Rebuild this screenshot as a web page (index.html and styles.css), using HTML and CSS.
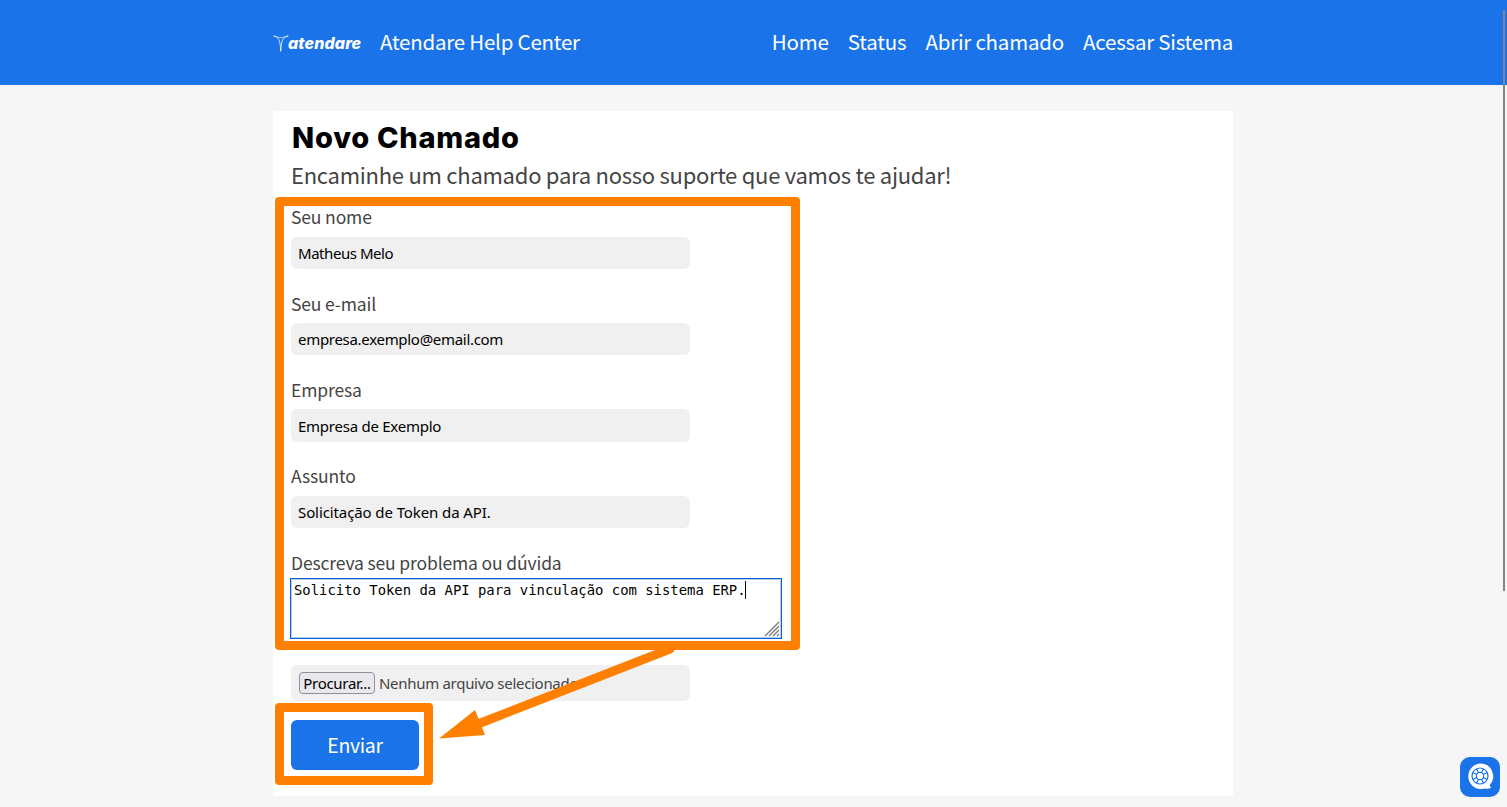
FILE: index.html
```
<!DOCTYPE html>
<html lang="pt-BR">
<head>
<meta charset="utf-8">
<title>Atendare Help Center</title>
<link rel="stylesheet" href="styles.css">
</head>
<body>
<header class="topbar">
  <div class="topbar-inner">
    <div class="logo">
      <svg class="logo-mark" width="16" height="17" viewBox="0 0 16 17" fill="none" stroke="#fff"><path d="M.3 1C5 1 7.600 5 7.600 16.500M15.500 1C10.500 1 7.900 5 7.900 16" stroke-width=".8"/><path d="M1 1C5 3 11 3 15 1" stroke-width=".6"/></svg>
      <span class="logo-name">atendare</span>
    </div>
    <a class="brand">Atendare Help Center</a>
    <nav class="nav"><a>Home</a><a>Status</a><a>Abrir chamado</a><a>Acessar Sistema</a></nav>
  </div>
</header>
<main class="card">
  <h1 class="title">Novo Chamado</h1>
  <p class="subtitle">Encaminhe um chamado para nosso suporte que vamos te ajudar!</p>
  <form class="form">
    <div class="field"><label class="label">Seu nome</label><div class="input input-name">Matheus Melo</div></div>
    <div class="field"><label class="label label-low">Seu e-mail</label><div class="input">empresa.exemplo@email.com</div></div>
    <div class="field"><label class="label label-low">Empresa</label><div class="input input-company">Empresa de Exemplo</div></div>
    <div class="field"><label class="label">Assunto</label><div class="input input-subject">Solicitação de Token da API.</div></div>
    <div class="message"><label class="label label-low">Descreva seu problema ou dúvida</label>
      <div class="textarea"><span>Solicito Token da API para vinculação com sistema ERP.</span><i class="caret"></i>
        <svg class="grip" width="16" height="16" viewBox="0 0 16 16" stroke="#777" stroke-width="1.300"><path d="M1 15L15 1M5 15L15 5M9 15L15 9M13 15L15 13"/></svg>
      </div>
    </div>
    <div class="file"><span class="browse">Procurar...</span><span>Nenhum arquivo selecionado</span></div>
    <div class="submit">Enviar</div>
  </form>
</main>
<div class="frame frame-form"></div>
<div class="frame frame-submit"></div>
<svg class="arrow" width="250" height="100" viewBox="430 645 250 100"><path d="M670 649L478 724" stroke="#ff8000" stroke-width="9" stroke-linecap="round"/><path d="M439 738.500L475 710L485 735Z" fill="#ff8000"/></svg>
<div class="scroll"></div>
<div class="chat">
  <svg width="40" height="40" viewBox="0 0 40 40" fill="none"><path d="M20 6.500A12.500 12.800 0 1 0 24.500 31.500C26.500 32 29 32 31.500 30.800C30.500 30.300 30 29.500 29.800 27.800A12.700 12.700 0 0 0 20 6.500Z" fill="#fff"/><g stroke="#1a73e8" stroke-width="1.200"><circle cx="20" cy="19" r="8"/><circle cx="20" cy="19" r="3.700"/><path d="M16.500 11.800L18.200 15.500M23.500 11.800L21.800 15.500M16.500 26.200L18.200 22.500M23.500 26.200L21.800 22.500M12.800 15.500L16.500 17.200M12.800 22.500L16.500 20.800M27.200 15.500L23.500 17.200M27.200 22.500L23.500 20.800"/></g></svg>
</div>
</body>
</html>
```
FILE: styles.css
```
* { box-sizing: border-box; }
html, body { height: 100%; overflow: hidden; }
body { margin: 0; background: #f6f6f6; font-family: "Noto Sans CJK JP", "Noto Sans", sans-serif; color: #444; white-space: nowrap; }
.topbar { height: 85px; background: #1a73e8; color: #fff; }
.topbar-inner { width: 960px; height: 81px; margin-left: 273px; display: flex; align-items: center; font-size: 20.5px; letter-spacing: -.23px; }
.logo { width: 107px; padding-top: 5px; display: flex; align-items: center; }
.logo-name { font: italic 800 16px/20px Inter, sans-serif; letter-spacing: .15px; margin-left: -1px; }
.nav { margin-left: auto; display: flex; gap: 19.2px; }
.card { width: 960px; height: 685px; margin: 26px 0 0 273px; padding: 9px 18px 0; background: #fff; }
.title { margin: 0; height: 36px; padding-left: 1px; font: 800 29px/35px Inter, sans-serif; letter-spacing: .75px; color: #000; }
.subtitle { margin: 0; height: 40px; font-size: 22px; line-height: 37px; letter-spacing: -.26px; }
.form { margin-top: 8px; }
.field { height: 86.2px; }
.label { display: block; height: 27px; font-size: 17.5px; line-height: 26px; letter-spacing: -.14px; }
.label-low { line-height: 27.6px; }
.input { width: 399px; height: 32px; margin-top: 6px; padding-left: 7px; border-radius: 6px; background: #f0f0f0; color: #000; font: 15px/32px "Noto Sans", sans-serif; letter-spacing: -.3px; }
.input-name { letter-spacing: -.45px; }
.input-company { height: 33px; line-height: 34px; letter-spacing: -.25px; }
.input-subject { letter-spacing: -.1px; }
.textarea { position: relative; width: 492px; height: 61px; margin: 2.2px 0 0 -1px; padding: 2px 3px; border: 1px solid #0b5cd5; box-shadow: inset 0 0 0 1px #b6cdf0; font: 13.900px/19px "DejaVu Sans Mono", monospace; color: #000; background: #fff; display: flex; }
.caret { width: 1px; height: 18px; margin-left: -1px; background: #000; }
.grip { position: absolute; right: 1px; bottom: 1px; }
.file { width: 399px; height: 36px; margin-top: 26px; padding-left: 8px; display: flex; align-items: center; gap: 4px; border-radius: 6px; background: #f0f0f0; font: 15px/20px "Noto Sans", sans-serif; letter-spacing: -.3px; }
.browse { width: 76px; height: 22px; border: 1px solid #8f8f9d; border-radius: 4px; background: #e9e9ed; color: #000; text-align: center; }
.submit { width: 128px; height: 50px; margin-top: 19px; border-radius: 6px; background: #1a73e8; color: #fff; font-size: 19.5px; line-height: 50px; letter-spacing: -.35px; text-align: center; }
.frame { position: absolute; border: 9px solid #ff8000; border-radius: 4px; }
.frame-form { left: 275px; top: 197px; width: 525px; height: 453px; }
.frame-submit { left: 275px; top: 703px; width: 158px; height: 82px; }
.arrow { position: absolute; left: 430px; top: 645px; }
.scroll { position: absolute; left: 1503px; top: 10px; width: 2px; height: 581px; background: #858585; }
.chat { position: absolute; left: 1460px; top: 757px; width: 40px; height: 40px; border-radius: 10px; background: #1a73e8; }
```
